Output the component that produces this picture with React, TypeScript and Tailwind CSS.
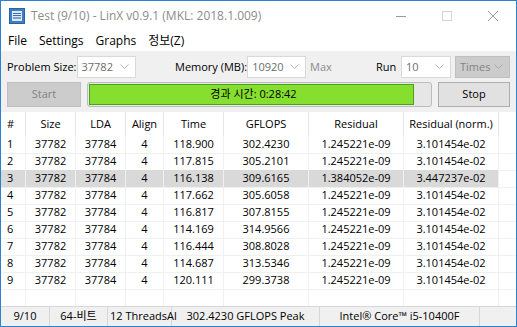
import React from "react";

const font = { fontFamily: '"Open Sans", "Noto Sans CJK KR", sans-serif' };

const rows = [
  ["1", "118.900", "302.4230", "1.245221e-09", "3.101454e-02"],
  ["2", "117.815", "305.2101", "1.245221e-09", "3.101454e-02"],
  ["3", "116.138", "309.6165", "1.384052e-09", "3.447237e-02"],
  ["4", "117.662", "305.6058", "1.245221e-09", "3.101454e-02"],
  ["5", "116.817", "307.8155", "1.245221e-09", "3.101454e-02"],
  ["6", "114.169", "314.9566", "1.245221e-09", "3.101454e-02"],
  ["7", "116.444", "308.8028", "1.245221e-09", "3.101454e-02"],
  ["8", "114.687", "313.5346", "1.245221e-09", "3.101454e-02"],
  ["9", "120.111", "299.3738", "1.245221e-09", "3.101454e-02"],
];

const cols = "grid grid-cols-[25px_50px_50px_38px_60px_85px_95px_95px_17px]";

function Chevron({ color = "#b0b0b0" }: { color?: string }) {
  return (
    <svg width="9" height="6" viewBox="0 0 9 6">
      <path d="M0.5 0.5 L4.5 4.5 L8.5 0.5" fill="none" stroke={color} strokeWidth="1" />
    </svg>
  );
}

function Combo({ value, w, disabled }: { value: string; w: string; disabled?: boolean }) {
  return (
    <div
      className={`${w} h-[22px] shrink-0 flex items-center justify-between pl-[4px] pr-[6px] border ${
        disabled ? "bg-[#cccccc] border-[#bfbfbf] text-[#838383]" : "bg-white border-[#d9d9d9] text-[#6d6d6d]"
      }`}
    >
      <span>{value}</span>
      <Chevron color={disabled ? "#a8a8a8" : "#b4b4b4"} />
    </div>
  );
}

export default function App() {
  return (
    <div
      className="w-[517px] h-[327px] border border-[#2b83d0] bg-[#f0f0f0] flex flex-col text-[11px] text-black overflow-hidden whitespace-nowrap"
      style={font}
    >
      {/* Title bar */}
      <div className="h-[30px] shrink-0 bg-white flex items-center">
        <div className="ml-[8px] w-[16px] h-[16px] bg-[#3b7fc4] border border-[#2a62a0] flex items-center justify-center">
          <div className="w-[10px] h-[10px] bg-[#dfe9f3] flex flex-col justify-center gap-[1px] px-[1px]">
            <div className="h-[1px] bg-[#3b6fae]" />
            <div className="h-[1px] bg-[#3b6fae]" />
            <div className="h-[2px] bg-[#7aa4d0]" />
          </div>
        </div>
        <span className="ml-[6px] text-[12px] text-[#8c8c8c]">Test (9/10) - LinX v0.9.1 (MKL: 2018.1.009)</span>
        <div className="ml-auto flex items-center h-full">
          <div className="w-[46px] h-full flex items-center justify-center">
            <div className="w-[10px] h-[1px] bg-[#9a9a9a]" />
          </div>
          <div className="w-[46px] h-full flex items-center justify-center">
            <div className="w-[10px] h-[10px] border border-[#d4d4d4]" />
          </div>
          <div className="w-[46px] h-full flex items-center justify-center">
            <svg width="10" height="10" viewBox="0 0 10 10">
              <path d="M0 0 L10 10 M10 0 L0 10" stroke="#9a9a9a" strokeWidth="1" />
            </svg>
          </div>
        </div>
      </div>

      {/* Menu bar */}
      <div className="h-[20px] shrink-0 bg-white flex items-center pl-[7px] gap-[12px] text-[12px]">
        <span>File</span>
        <span>Settings</span>
        <span>Graphs</span>
        <span>정보(Z)</span>
      </div>

      {/* Toolbar */}
      <div className="h-[61px] shrink-0 pt-[5px] px-[6px] flex flex-col gap-[4px]">
        <div className="h-[22px] flex items-center">
          <div className="w-[128px] flex items-center justify-between">
            <span>Problem Size:</span>
            <Combo value="37782" w="w-[59px]" />
          </div>
          <div className="ml-[40px] w-[131px] flex items-center justify-between">
            <span>Memory (MB):</span>
            <Combo value="10920" w="w-[59px]" />
          </div>
          <div className="w-[70px] pl-[4px] text-[#8a8a8a]">Max</div>
          <div className="w-[75px] flex items-center justify-between">
            <span>Run</span>
            <Combo value="10" w="w-[50px]" />
          </div>
          <div className="ml-[4px]">
            <Combo value="Times" w="w-[55px]" disabled />
          </div>
        </div>
        <div className="h-[25px] flex items-stretch">
          <div className="w-[74px] bg-[#cccccc] border border-[#bfbfbf] text-[#838383] flex items-center justify-center">
            Start
          </div>
          <div className="ml-[6px] w-[345px] rounded-[3px] border border-[#bcbcbc] bg-[#e6e6e6] p-[1px] pr-[17px] flex">
            <div className="flex-1 bg-[#86df2e] border border-[#4aa41b] flex items-center justify-center pl-[4px]">
              경과 시간: 0:28:42
            </div>
          </div>
          <div className="ml-[6px] w-[72px] bg-[#e1e1e1] border border-[#adadad] flex items-center justify-center">
            Stop
          </div>
        </div>
      </div>

      {/* Table */}
      <div className="flex-1 bg-white flex flex-col">
        <div className={`${cols} h-[24px]`}>
          {["#", "Size", "LDA", "Align", "Time", "GFLOPS", "Residual", "Residual (norm.)", ""].map((h, i) => (
            <div
              key={i}
              className={`flex items-center ${i === 8 ? "" : "border-r border-[#e5e5e5]"} ${
                i === 0 ? "pl-[6px]" : "justify-center"
              }`}
            >
              {h}
            </div>
          ))}
        </div>
        {rows.map((r) => {
          const sel = r[0] === "3";
          const cells = [r[0], "37782", "37784", "4", r[1], r[2], r[3], r[4]];
          return (
            <div key={r[0]} className={`${cols} h-[17px]`}>
              {cells.map((c, i) => (
                <div
                  key={i}
                  className={`flex items-center border-r border-b border-[#f0f0f0] ${
                    sel ? "bg-[#d9d9d9]" : ""
                  } ${i === 0 ? "pl-[6px]" : "justify-center"}`}
                >
                  {c}
                </div>
              ))}
              <div className="border-b border-[#f0f0f0]" />
            </div>
          );
        })}
        <div className={`${cols} h-[17px]`}>
          {Array.from({ length: 8 }).map((_, i) => (
            <div key={i} className="border-r border-[#f0f0f0]" />
          ))}
          <div />
        </div>
      </div>

      {/* Status bar */}
      <div className="h-[20px] shrink-0 border-t border-[#d7d7d7] flex items-center">
        <div className="w-[49px] h-full flex items-center justify-center border-r border-[#d7d7d7]">9/10</div>
        <div className="w-[58px] h-full flex items-center justify-center border-r border-[#d7d7d7]">64-비트</div>
        <div className="w-[64px] h-full flex items-center pl-[2px] border-r border-[#d7d7d7]">12 ThreadsAl</div>
        <div className="w-[148px] h-full flex items-center justify-center border-r border-[#d7d7d7]">
          302.4230 GFLOPS Peak
        </div>
        <div className="w-[160px] h-full flex items-center justify-center border-r border-[#d7d7d7]">
          Intel® Core™ i5-10400F
        </div>
        <div className="flex-1 h-full" />
      </div>
    </div>
  );
}
